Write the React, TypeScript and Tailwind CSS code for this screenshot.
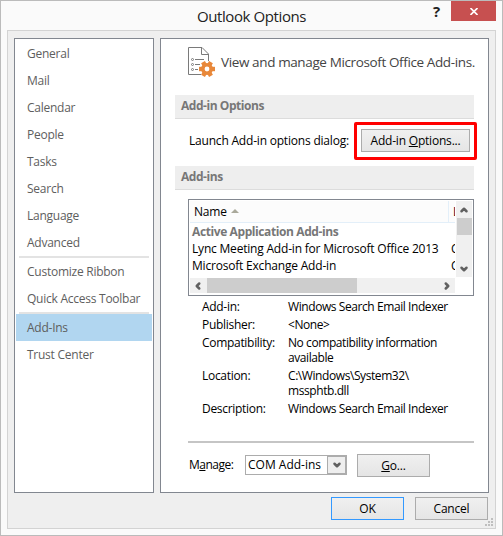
import { ChevronDown, ChevronLeft, ChevronRight, ChevronUp } from 'lucide-react';

const navGroups = [
    [
        'General',
        'Mail',
        'Calendar',
        'People',
        'Tasks',
        'Search',
        'Language',
        'Advanced',
    ],
    ['Customize Ribbon', 'Quick Access Toolbar'],
    ['Add-Ins', 'Trust Center'],
];

const details = [
    { label: 'Add-in:', value: 'Windows Search Email Indexer' },
    { label: 'Publisher:', value: '<None>' },
    { label: 'Compatibility:', value: 'No compatibility information\navailable' },
    { label: 'Location:', value: 'C:\\Windows\\System32\\\nmssphtb.dll' },
    { label: 'Description:', value: 'Windows Search Email Indexer' },
];

const buttonClass =
    'flex h-[23px] shrink-0 items-center justify-center border bg-gradient-to-b from-[#f0f0f0] to-[#e5e5e5]';

function SectionTitle({ children }: { children: string }) {
    return (
        <h2 className="flex h-6 items-center border-b border-[#dcdcdc] bg-[#eee] pb-0.5 pl-1.5 text-[12px] font-bold tracking-[-0.45px] text-[#777]">
            {children}
        </h2>
    );
}

function AddinsIcon() {
    return (
        <svg width="28" height="31" viewBox="0 0 28 31" fill="none" className="shrink-0">
            <path
                d="M13 27.500H.5V.5H14l6.500 6.500V14M13.500.5V7.500H20.500"
                stroke="#7a7a7a"
            />
            <circle cx="4.500" cy="12.500" r="1" stroke="#7a7a7a" />
            <circle cx="4.500" cy="17.500" r="1" stroke="#7a7a7a" />
            <circle cx="4.500" cy="22.500" r="1" stroke="#7a7a7a" />
            <path d="M7 12.500h9M7 17.500h5M7 22.500h3" stroke="#7a7a7a" />
            <g fill="#e8883a">
                <rect x="16.800" y="14" width="4.400" height="16" transform="rotate(30 19 22)" />
                <rect x="16.800" y="14" width="4.400" height="16" transform="rotate(90 19 22)" />
                <rect x="16.800" y="14" width="4.400" height="16" transform="rotate(150 19 22)" />
            </g>
            <circle cx="19" cy="22" r="4.200" stroke="#e8883a" strokeWidth="3.600" fill="#fff" />
        </svg>
    );
}

function Sidebar() {
    return (
        <nav className="flex w-[140px] shrink-0 flex-col border border-[#828790] bg-white px-px pt-px tracking-[-0.25px] text-[#5e5e5e]">
            {navGroups.map((group, i) => (
                <div key={i}>
                    {i > 0 && <div className="mx-[3px] h-0.5 bg-[#e3e3e3]" />}
                    {group.map((item) => (
                        <div
                            key={item}
                            className={`flex h-[27px] items-center pl-[11px] pt-px ${
                                item === 'Add-Ins' ? 'bg-[#b1d6f0]' : ''
                            }`}
                        >
                            {item}
                        </div>
                    ))}
                </div>
            ))}
        </nav>
    );
}

function AddinsList() {
    return (
        <div className="ml-[13px] mt-[9px] h-[97px] border border-[#828790] bg-white p-px">
            <div className="flex h-[77px]">
                <div className="w-[265px] shrink-0 overflow-hidden whitespace-nowrap">
                    <div className="flex h-[22px] border-b border-[#e3eff9] bg-[#fcfcfc]">
                        <div className="flex w-[259px] shrink-0 items-center border-r border-[#e3eff9] pl-1 pt-px">
                            Name
                            <svg width="8" height="4" className="-mt-0.5 ml-1">
                                <path d="M0 4 4 0 8 4Z" fill="#aaa99b" />
                            </svg>
                        </div>
                        <div className="flex shrink-0 items-center pl-[4px] pt-px text-[#400020]">
                            Location
                        </div>
                    </div>
                    <div className="h-[17px] pl-0.5 font-bold leading-[17px] tracking-[-0.4px] text-[#777]">
                        Active Application Add-ins
                    </div>
                    <div className="flex h-[17px] pl-0.5 leading-[17px]">
                        <span className="w-[259px] shrink-0">
                            Lync Meeting Add-in for Microsoft Office 2013
                        </span>
                        <span>C:\</span>
                    </div>
                    <div className="flex h-[17px] pl-0.5 leading-[17px]">
                        <span className="w-[259px] shrink-0">Microsoft Exchange Add-in</span>
                        <span>C:\</span>
                    </div>
                </div>
                <div className="ml-px flex h-[76px] w-4 shrink-0 flex-col items-center bg-[#f0f0f0]">
                    <ChevronUp
                        className="mt-1 size-[10px] shrink-0 text-[#606060]"
                        strokeWidth={6}
                    />
                    <div className="mt-[3px] h-[17px] w-[15px] bg-[#cdcdcd]" />
                    <ChevronDown
                        className="mb-[3px] mt-auto size-[10px] shrink-0 text-[#606060]"
                        strokeWidth={6}
                    />
                </div>
            </div>
            <div className="flex h-[15px] w-[265px] items-center bg-[#f0f0f0]">
                <ChevronLeft className="ml-[3px] size-[10px] text-[#606060]" strokeWidth={6} />
                <div className="ml-1 h-[15px] w-[150px] bg-[#cdcdcd]" />
                <ChevronRight
                    className="ml-auto mr-[3px] size-[10px] text-[#606060]"
                    strokeWidth={6}
                />
            </div>
        </div>
    );
}

function AddinsPanel() {
    return (
        <main className="w-[329px] shrink-0 border border-[#828790] bg-white px-[14px]">
            <div className="flex h-14 pl-[13px] pt-2">
                <AddinsIcon />
                <p className="ml-[5px] mt-[5px] whitespace-nowrap text-[13.5px] leading-5 tracking-[-0.38px] text-[#444]">
                    View and manage Microsoft Office Add-ins.
                </p>
            </div>

            <SectionTitle>Add-in Options</SectionTitle>
            <div className="flex h-[47px] pl-[14px]">
                <span className="mt-[14px] w-[165px] shrink-0 whitespace-nowrap">
                    Launch Add-in options dialog:
                </span>
                <div className="mt-[3px] h-[38px] w-[123px] shrink-0 rounded-[2px] border-[3px] border-[#f00] pl-1 pt-1">
                    <button className={`${buttonClass} w-[109px] border-[#acacac]`}>
                        Add-in&nbsp;<u>O</u>ptions...
                    </button>
                </div>
            </div>

            <SectionTitle>Add-ins</SectionTitle>
            <AddinsList />

            <dl className="ml-[27px] mt-[3px] flex flex-col gap-[3px] leading-[15px]">
                {details.map(({ label, value }) => (
                    <div key={label} className="flex">
                        <dt className="w-[86px] shrink-0 tracking-[-0.3px]">{label}</dt>
                        <dd className="whitespace-pre tracking-[-0.42px]">{value}</dd>
                    </div>
                ))}
            </dl>

            <div className="ml-[13px] mt-[25px] h-0.5 bg-[#c5c5c5]" />

            <div className="ml-[14px] mt-[11px] flex">
                <span className="mt-[3px] w-14 tracking-[-0.5px]">
                    M<u>a</u>nage:
                </span>
                <div className="mt-px flex h-5 w-[102px] border border-[#acacac]">
                    <span className="w-[81px] pl-0.5 leading-[18px] tracking-normal">
                        COM Add-ins
                    </span>
                    <span className="flex w-[19px] items-center justify-center border border-[#acacac] bg-[#eee]">
                        <ChevronDown className="size-[10px] text-[#606060]" strokeWidth={6} />
                    </span>
                </div>
                <button className={`${buttonClass} ml-[10px] w-[73px] border-[#acacac]`}>
                    <u>G</u>o...
                </button>
            </div>
        </main>
    );
}

export default function App() {
    return (
        <div className="flex h-[536px] w-[503px] flex-col border border-[#bbb] bg-[#fafafa] font-['Open_Sans','Noto_Sans',sans-serif] text-[12px] leading-4 tracking-[-0.2px] text-black">
            <header className="relative flex h-[29px] items-center justify-center">
                <h1 className="text-[15px] tracking-[-0.4px] text-[#222]">Outlook Options</h1>
                <div className="absolute right-[6px] top-0 flex">
                    <span className="w-[18px] text-[15px] font-bold leading-5 text-[#222]">
                        ?
                    </span>
                    <button className="flex h-5 w-[45px] items-center justify-center bg-[#c75050]">
                        <svg width="8" height="7" viewBox="0 0 8 7">
                            <path d="M.5 0 7.500 7M7.500 0 .5 7" stroke="#fff" strokeWidth="1.600" />
                        </svg>
                    </button>
                </div>
            </header>

            <div className="relative mx-1.5 h-[499px] border border-[#d3d3d3] bg-[#efefef] px-1.5 pt-[7px]">
                <div className="flex h-[455px] gap-1.5">
                    <Sidebar />
                    <AddinsPanel />
                </div>
                <div className="mr-px mt-1 flex justify-end gap-[11px]">
                    <button className={`${buttonClass} w-[73px] border-[#3399ff]`}>OK</button>
                    <button className={`${buttonClass} w-[73px] border-[#acacac]`}>Cancel</button>
                </div>
                <svg
                    width="8"
                    height="8"
                    className="absolute bottom-0.5 right-0.5"
                    fill="#bfbfbf"
                >
                    <path d="M6 0h2v2h-2zM3 3h2v2h-2zM6 3h2v2h-2zM0 6h2v2h-2zM3 6h2v2h-2zM6 6h2v2h-2z" />
                </svg>
            </div>
        </div>
    );
}
